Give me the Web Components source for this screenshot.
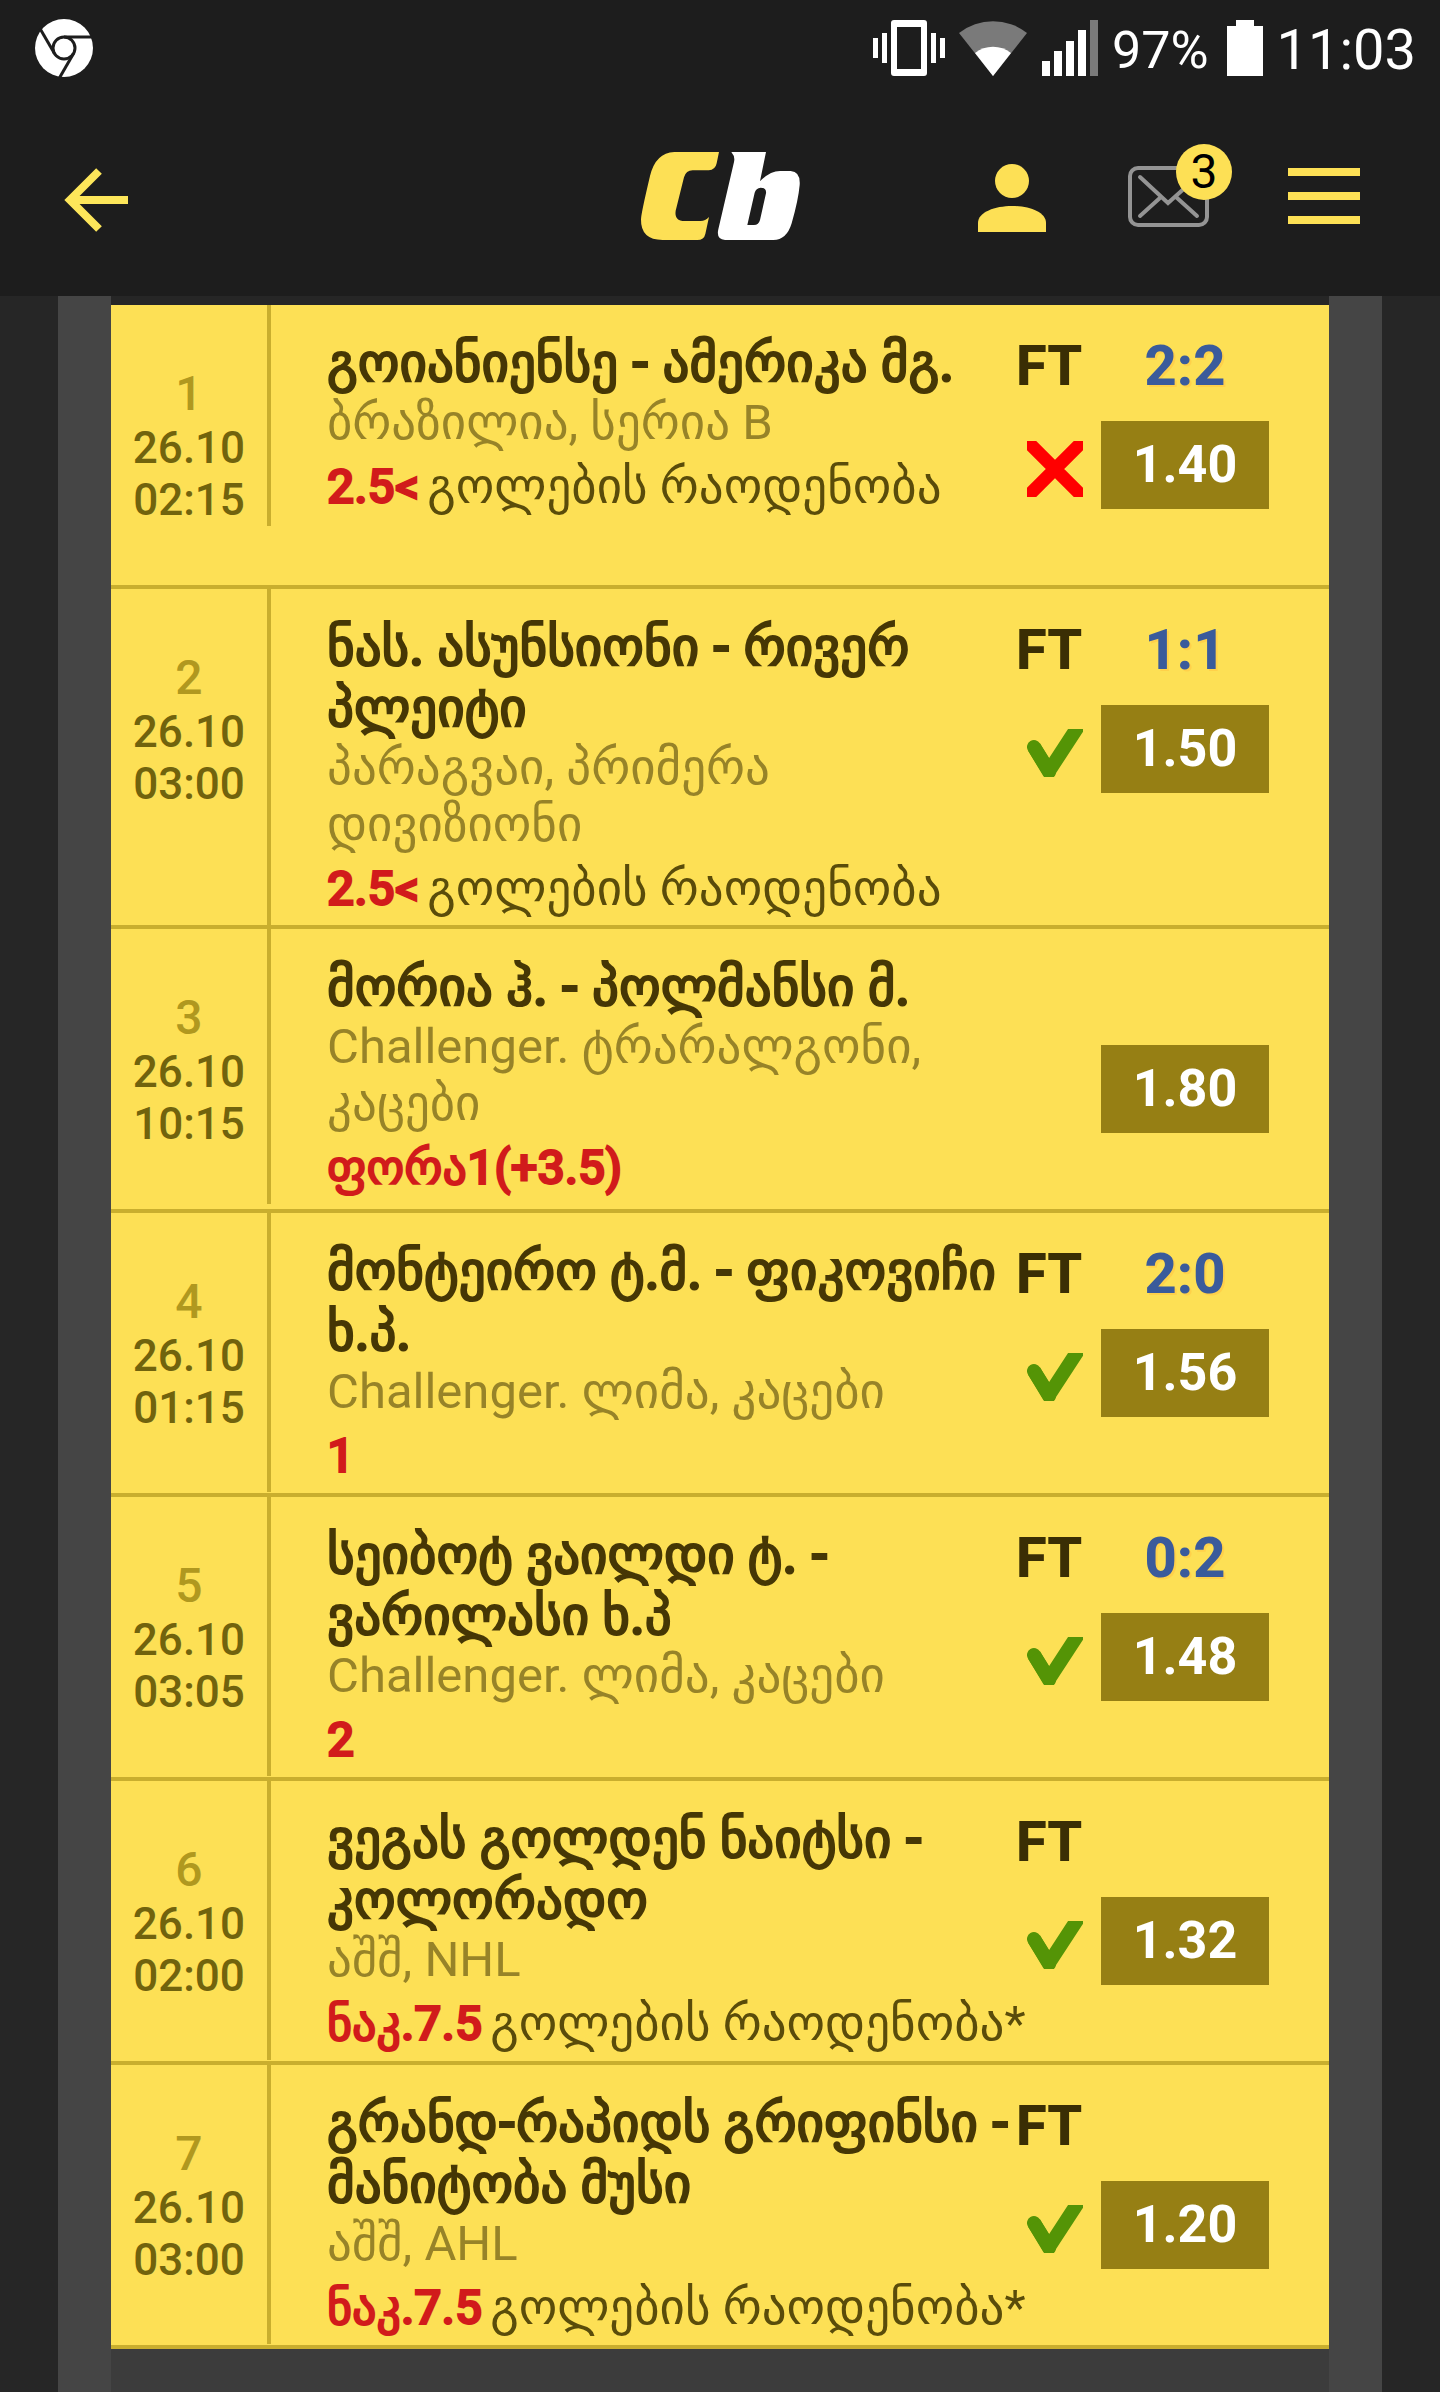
<!DOCTYPE html>
<html lang="ka">
<head>
<meta charset="utf-8">
<meta name="viewport" content="width=device-width, initial-scale=1">
<title>Cb</title>
<style>
    body {
        margin: 0;
        background: #262626;
        font-family: Roboto, "DejaVu Sans", sans-serif;
    }

    bet-app {
        min-height: 100vh;
    }
</style>
</head>
<body>
<bet-app>
    <status-bar slot="top" battery="97%" time="11:03"></status-bar>
    <app-header slot="top" messages="3"></app-header>

    <bet-row index="1" date="26.10" time="02:15" status="FT" score="2:2" odds="1.40" verdict="lost">
        <span slot="teams">გოიანიენსე - ამერიკა მგ.</span>
        <span slot="league">ბრაზილია, სერია B</span>
        <b slot="pick">2.5&lt;</b>
        <span slot="market">გოლების რაოდენობა</span>
    </bet-row>
    <bet-row index="2" date="26.10" time="03:00" status="FT" score="1:1" odds="1.50" verdict="won">
        <span slot="teams">ნას. ასუნსიონი - რივერ პლეიტი</span>
        <span slot="league">პარაგვაი, პრიმერა დივიზიონი</span>
        <b slot="pick">2.5&lt;</b>
        <span slot="market">გოლების რაოდენობა</span>
    </bet-row>
    <bet-row index="3" date="26.10" time="10:15" odds="1.80">
        <span slot="teams">მორია ჰ. - პოლმანსი მ.</span>
        <span slot="league">Challenger. ტრარალგონი, კაცები</span>
        <b slot="pick">ფორა1(+3.5)</b>
    </bet-row>
    <bet-row index="4" date="26.10" time="01:15" status="FT" score="2:0" odds="1.56" verdict="won">
        <span slot="teams">მონტეირო ტ.მ. - ფიკოვიჩი ხ.პ.</span>
        <span slot="league">Challenger. ლიმა, კაცები</span>
        <b slot="pick">1</b>
    </bet-row>
    <bet-row index="5" date="26.10" time="03:05" status="FT" score="0:2" odds="1.48" verdict="won">
        <span slot="teams">სეიბოტ ვაილდი ტ. - ვარილასი ხ.პ</span>
        <span slot="league">Challenger. ლიმა, კაცები</span>
        <b slot="pick">2</b>
    </bet-row>
    <bet-row index="6" date="26.10" time="02:00" status="FT" odds="1.32" verdict="won">
        <span slot="teams">ვეგას გოლდენ ნაიტსი - კოლორადო</span>
        <span slot="league">აშშ, NHL</span>
        <b slot="pick">ნაკ.7.5</b>
        <span slot="market">გოლების რაოდენობა*</span>
    </bet-row>
    <bet-row index="7" date="26.10" time="03:00" status="FT" odds="1.20" verdict="won">
        <span slot="teams">გრანდ-რაპიდს გრიფინსი - მანიტობა მუსი</span>
        <span slot="league">აშშ, AHL</span>
        <b slot="pick">ნაკ.7.5</b>
        <span slot="market">გოლების რაოდენობა*</span>
    </bet-row>
</bet-app>

<script>
class BetApp extends HTMLElement {

    constructor () {
        super();
        this.shadowDOM = this.attachShadow({mode: "open"});
    }

    connectedCallback(){
        this.render();
    }

    render() {
        this.shadowDOM.innerHTML = `
        <style>
            :host {
                display: flex;
                flex-direction: column;
            }

            .panel {
                flex: 1;
                display: flex;
                flex-direction: column;
                margin: 0 58px;
                border: solid #454545;
                border-width: 0 53px;
            }

            .list {
                padding-top: 9px;
            }

            .summary {
                flex: 1;
                background: #3c3c3c;
            }
        </style>
        <slot name="top"></slot>
        <main class="panel">
            <div class="list" role="list"><slot></slot></div>
            <div class="summary"></div>
        </main>`;
    }
}

class StatusBar extends HTMLElement {

    constructor () {
        super();
        this.shadowDOM = this.attachShadow({mode: "open"});
    }

    connectedCallback(){
        this.render();
    }

    render() {
        this.shadowDOM.innerHTML = `
        <style>
            :host {
                display: flex;
                align-items: center;
                gap: 14px;
                height: 96px;
                padding: 0 24px 0 35px;
                background: #1d1d1d;
                color: #fff;
            }

            svg {
                display: block;
                flex: none;
            }

            .chrome {
                margin-right: auto;
            }

            span {
                padding-top: 4px;
            }

            .battery {
                font-size: 52px;
            }

            .time {
                font-size: 56px;
            }
        </style>
        <svg class="chrome" width="58" height="58" viewBox="0 0 58 58" fill="none" stroke="#1d1d1d" stroke-width="3">
            <circle cx="29" cy="29" r="29" fill="#fff" stroke="none"/>
            <circle cx="29" cy="29" r="11"/>
            <path d="M29 18H58"/>
            <path d="M29 18H58" transform="rotate(120 29 29)"/>
            <path d="M29 18H58" transform="rotate(240 29 29)"/>
        </svg>
        <svg width="72" height="56" viewBox="0 0 72 56" fill="#fff">
            <path d="M0 18h5v20H0zM9 13h5v30H9zM58 13h5v30h-5zM67 18h5v20h-5z"/>
            <path fill-rule="evenodd" d="M21 0h30a3 3 0 0 1 3 3v50a3 3 0 0 1-3 3H21a3 3 0 0 1-3-3V3a3 3 0 0 1 3-3zM24 7v42h24V7z"/>
        </svg>
        <svg width="69" height="56" viewBox="0 0 69 56">
            <path fill="#7a7a7a" d="M34 56 0 13A55 55 0 0 1 68 13z"/>
            <path fill="#fff" d="M34 56 16 33A29 29 0 0 1 52 33z"/>
        </svg>
        <svg width="56" height="56" viewBox="0 0 56 56" fill="#fff">
            <path d="M0 41h8v15H0zM12 31h8v25h-8zM24 21h8v35h-8zM36 10h8v46h-8z"/>
            <path fill="#7a7a7a" d="M48 0h8v56h-8z"/>
        </svg>
        <span class="battery">${this.getAttribute("battery")}</span>
        <svg width="40" height="56" viewBox="0 0 40 56" fill="#fff">
            <path d="M13 0h18v6h9v50H4V6h9z"/>
        </svg>
        <span class="time">${this.getAttribute("time")}</span>`;
    }
}

class AppHeader extends HTMLElement {

    constructor () {
        super();
        this.shadowDOM = this.attachShadow({mode: "open"});
    }

    connectedCallback(){
        this.render();
    }

    render() {
        this.shadowDOM.innerHTML = `
        <style>
            :host {
                display: grid;
                grid-template-columns: 1fr auto 1fr;
                align-items: center;
                height: 200px;
                padding: 0 80px 0 64px;
                background: #1d1d1d;
            }

            button, a {
                display: block;
                position: relative;
                margin: 0;
                padding: 0;
                border: 0;
                background: none;
                color: #fde055;
                font: inherit;
                cursor: pointer;
            }

            svg {
                display: block;
            }

            /* evens out the side paddings so that the logo stays centred */
            .logo {
                margin-left: 16px;
            }

            .tools {
                display: flex;
                justify-content: flex-end;
                gap: 56px;
            }

            .user {
                margin-right: 26px;
            }

            .badge {
                position: absolute;
                top: -8px;
                right: 0;
                width: 56px;
                border-radius: 50%;
                background: #fde055;
                color: #000;
                font-size: 48px;
                line-height: 56px;
                text-align: center;
            }
        </style>
        <div>
            <button type="button" aria-label="Back">
                <svg width="64" height="88" viewBox="0 0 64 88" fill="none" stroke="#fde65a" stroke-width="8">
                    <path d="M35 19 6 48l29 29M6 48h58"/>
                </svg>
            </button>
        </div>
        <a class="logo" href="#" aria-label="Cb">
            <svg width="160" height="88" viewBox="30 36 480 264">
                <path fill="#fde055" d="M133 36H267L260 70Q256 90 236 91H188Q168 91 162 112L137 212Q132 243 165 243H212Q226 243 237 231L226 282Q222 300 202 300H98Q32 300 33 238Q33 222 60 108Q77 38 133 36Z"/>
                <path fill="#fff" fill-rule="evenodd" d="M304 36H408L390 124Q420 93 450 93H482Q512 95 509 135Q505 180 485 250Q470 300 430 300H285Q258 298 265 268L312 66Q316 50 304 36ZM352 255H372Q386 255 390 240L408 160Q410 143 392 143Q378 145 374 158Z"/>
            </svg>
        </a>
        <nav class="tools">
            <button class="user" type="button" aria-label="Profile">
                <svg width="68" height="88" viewBox="0 0 68 88" fill="#fde055">
                    <circle cx="34" cy="29" r="17"/>
                    <path d="M0 80V71C0 60 17 54 34 54S68 60 68 71V80Z"/>
                </svg>
            </button>
            <button type="button" aria-label="Messages">
                <svg width="104" height="88" viewBox="0 0 104 88" fill="none" stroke="#949494" stroke-width="4" stroke-linecap="round">
                    <rect x="2" y="16" width="77" height="57" rx="8"/>
                    <path d="M12 25 40 51 69 25M12 64 33 45M69 64 48 45"/>
                </svg>
                <span class="badge">${this.getAttribute("messages")}</span>
            </button>
            <button type="button" aria-label="Menu">
                <svg width="72" height="88" viewBox="0 0 72 88" fill="#fde055">
                    <path d="M0 16h72v8H0zM0 40h72v8H0zM0 64h72v8H0z"/>
                </svg>
            </button>
        </nav>`;
    }
}

class BetRow extends HTMLElement {

    constructor () {
        super();
        this.shadowDOM = this.attachShadow({mode: "open"});
    }

    connectedCallback(){
        this.setAttribute("role", "listitem");
        this.render();
    }

    verdictIcon(verdict) {
        if (verdict === "won") {
            return `<svg width="56" height="48" viewBox="0 0 56 48" fill="none" stroke="#549406" stroke-width="14">
                <path stroke-linecap="round" d="M7 18 22 43"/>
                <path d="M7 18 22 42 52 -4"/>
            </svg>`;
        }
        if (verdict === "lost") {
            return `<svg width="56" height="56" viewBox="0 0 56 56" fill="none" stroke="#f00" stroke-width="13" stroke-linecap="round">
                <path d="M4 4 52 52M52 4 4 52"/>
            </svg>`;
        }
        return "";
    }

    render() {
        const attr = (name) => this.getAttribute(name) || "";

        this.shadowDOM.innerHTML = `
        <style>
            :host {
                display: flex;
                align-items: flex-start;
                box-sizing: border-box;
                min-height: 284px;
                border-bottom: 4px solid #c9ae2e;
                background: #fde055;
            }

            .info {
                flex: 1;
                min-width: 0;
                display: flex;
            }

            .when {
                flex: none;
                width: 156px;
                padding-top: 60px;
                border-right: 4px solid #c9ae2e;
                color: #71630d;
                font-size: 44px;
                font-weight: 500;
                line-height: 52px;
                text-align: center;
            }

            .index {
                color: #b0981f;
                font-size: 48px;
                line-height: 57px;
            }

            .bet {
                flex: 1;
                min-width: 0;
                padding: 28px 0 0 56px;
                white-space: nowrap;
            }

            .teams {
                color: #463705;
                font-size: 53px;
                font-weight: 500;
                line-height: 61px;
                white-space: normal;
                -webkit-text-stroke: 2px #463705;
            }

            .league {
                color: #978328;
                font-size: 49px;
                line-height: 57px;
                white-space: normal;
            }

            .market {
                display: flex;
                gap: 8px;
                color: #5a4c0a;
                font-size: 49px;
                line-height: 72px;
            }

            ::slotted(b) {
                color: #d11b1b;
                font-size: 48px;
                font-weight: 500;
                -webkit-text-stroke: 2px #d11b1b;
            }

            .result {
                flex: none;
                display: grid;
                grid-template: 61px 88px / 85px 168px;
                row-gap: 24px;
                align-items: center;
                padding: 31px 60px 0 0;
                font-size: 56px;
                font-weight: 800;
                line-height: 61px;
            }

            .status {
                color: #3a2e04;
            }

            .score {
                color: #3a5b9b;
                text-align: center;
                text-shadow: 2px 2px #ffd14a;
            }

            .verdict {
                justify-self: end;
                padding: 8px 18px 0 0;
            }

            .verdict svg {
                display: block;
            }

            .odds {
                background: #967f14;
                color: #fff;
                font-size: 52px;
                font-weight: 700;
                line-height: 88px;
                text-align: center;
            }
        </style>
        <div class="info">
            <div class="when">
                <div class="index">${attr("index")}</div>
                <div>${attr("date")}</div>
                <div>${attr("time")}</div>
            </div>
            <div class="bet">
                <div class="teams"><slot name="teams"></slot></div>
                <div class="league"><slot name="league"></slot></div>
                <div class="market"><slot name="pick"></slot><slot name="market"></slot></div>
            </div>
        </div>
        <div class="result">
            <span class="status">${attr("status")}</span>
            <span class="score">${attr("score")}</span>
            <span class="verdict">${this.verdictIcon(attr("verdict"))}</span>
            <span class="odds">${attr("odds")}</span>
        </div>`;
    }
}

customElements.define("bet-app", BetApp);
customElements.define("status-bar", StatusBar);
customElements.define("app-header", AppHeader);
customElements.define("bet-row", BetRow);
</script>
</body>
</html>
